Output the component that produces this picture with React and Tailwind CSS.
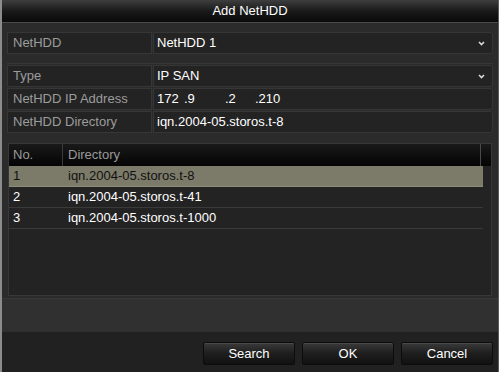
import React from 'react';

const font = { fontFamily: '"Liberation Sans", Arial, sans-serif' };

const Chevron = () => (
  <svg width="7" height="5" viewBox="0 0 7 5" className="text-[#d8d8d8]">
    <path d="M1 1 L3.5 3.5 L6 1" fill="none" stroke="currentColor" strokeWidth="1.6" />
  </svg>
);

const FormRow = ({ label, children, select }) => (
  <div className="flex h-[22px] gap-px">
    <div className="w-[145px] bg-[#232323] border border-[#363636] flex items-center pl-[5px] text-[#9c9c9c]">
      {label}
    </div>
    <div className="flex-1 bg-[#232323] border border-[#363636] rounded-r-[3px] flex items-center pl-[3px] pr-[7px] text-white">
      <div className="flex-1">{children}</div>
      {select && <Chevron />}
    </div>
  </div>
);

const rows = [
  { no: 1, dir: 'iqn.2004-05.storos.t-8' },
  { no: 2, dir: 'iqn.2004-05.storos.t-41' },
  { no: 3, dir: 'iqn.2004-05.storos.t-1000' },
];

const Btn = ({ children }) => (
  <button className="w-[92px] h-[23px] rounded-[2px] border border-[#0c0c0c] bg-gradient-to-b from-[#3a3a3a] via-[#1e1e1e] to-[#121212] text-white text-[13px] shadow-[inset_0_1px_0_#4a4a4a]">
    {children}
  </button>
);

export default function App() {
  return (
    <div style={font} className="w-[499px] h-[372px] flex flex-col bg-[#212121] border-l-2 border-l-[#8c8c8c] border-r border-r-[#5a5a5a] text-[13px] overflow-hidden">
      {/* title */}
      <div className="h-[23px] shrink-0 bg-gradient-to-b from-[#3e3e3e] via-[#1a1a1a] to-[#0a0a0a] border-b border-[#4a4a4a] text-white text-[13px] flex items-center justify-center">
        Add NetHDD
      </div>

      {/* body */}
      <div className="h-[309px] bg-[#2b2b2b] flex flex-col">
        <div className="px-[5px] pt-[9px] flex flex-col">
          <FormRow label="NetHDD" select>NetHDD 1</FormRow>
          <div className="h-[10px] border-b border-[#363636] mb-px" />
          <div className="flex flex-col gap-px">
            <FormRow label="Type" select>IP SAN</FormRow>
            <FormRow label="NetHDD IP Address">
              <div className="flex">
                <span className="w-[27px]">172</span>
                <span className="w-[41px]">.9</span>
                <span className="w-[30px]">.2</span>
                <span>.210</span>
              </div>
            </FormRow>
            <FormRow label="NetHDD Directory">iqn.2004-05.storos.t-8</FormRow>
          </div>
        </div>

        {/* table */}
        <div className="mx-[6px] mt-[10px] h-[153px] bg-[#232323] border border-[#383838] flex flex-col">
          <div className="h-[22px] flex bg-gradient-to-b from-[#1a1a1a] to-[#050505] text-[#9a9a9a]">
            <div className="w-[54px] pl-[4px] flex items-center border-r border-[#3a3a3a]">No.</div>
            <div className="flex-1 pl-[5px] flex items-center">Directory</div>
            <div className="w-[11px] border-l border-[#4a4a4a]" />
          </div>
          {rows.map((r, i) => (
            <div
              key={r.no}
              className={`h-[21px] mr-[8px] flex items-center border-b ${
                i === 0 ? 'bg-[#7c7a68] border-[#8e8c7a] text-[#111]' : 'border-[#3a3a3a] text-white'
              }`}
            >
              <div className="w-[55px] pl-[4px]">{r.no}</div>
              <div className="pl-[4px]">{r.dir}</div>
            </div>
          ))}
        </div>

        <div className="flex-1 mt-[2px] bg-[#303030] border-t border-[#373737]" />
      </div>

      {/* buttons */}
      <div className="flex-1 flex justify-end items-start gap-[7px] pt-[10px] pr-[5px] bg-[#212121]">
        <Btn>Search</Btn>
        <Btn>OK</Btn>
        <Btn>Cancel</Btn>
      </div>
    </div>
  );
}
